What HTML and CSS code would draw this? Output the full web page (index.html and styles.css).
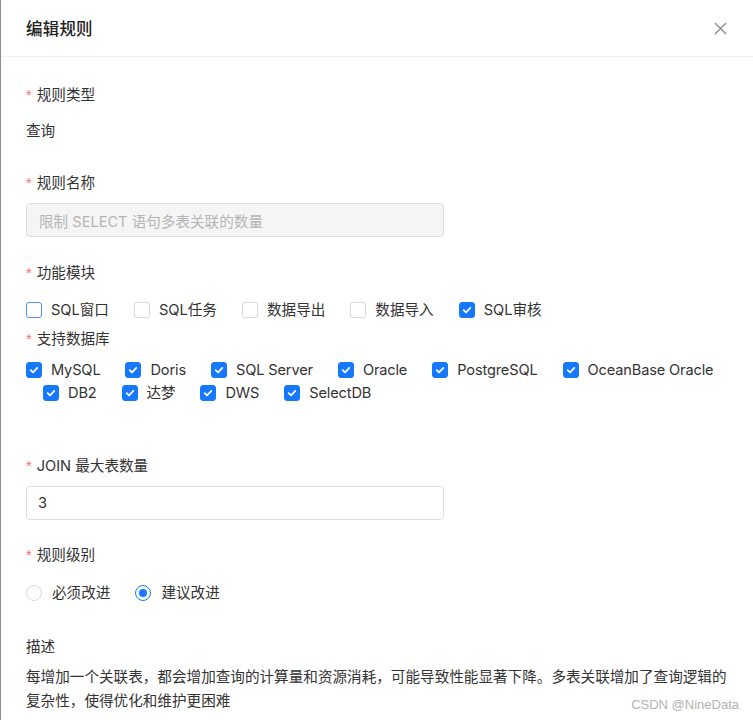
FILE: index.html
```html
<!DOCTYPE html>
<html lang="zh-CN">
<head>
<meta charset="utf-8">
<title>编辑规则</title>
<link rel="stylesheet" href="styles.css">
</head>
<body>
<div class="drawer">
  <div class="header">
    <div class="title">编辑规则</div>
    <svg class="close" width="14" height="14" viewBox="0 0 14 14"><path d="M1 1L13 13M13 1L1 13" stroke="#8a8a8a" stroke-width="1.4" fill="none"/></svg>
  </div>
  <div class="body">
    <div class="item item-type">
      <div class="label"><span class="req">*</span>规则类型</div>
      <div class="plain">查询</div>
    </div>
    <div class="item item-name">
      <div class="label"><span class="req">*</span>规则名称</div>
      <div class="input disabled">限制 SELECT 语句多表关联的数量</div>
    </div>
    <div class="item item-module">
      <div class="label"><span class="req">*</span>功能模块</div>
      <div class="row">
        <label class="cb"><span class="box hover"></span>SQL窗口</label>
        <label class="cb"><span class="box"></span>SQL任务</label>
        <label class="cb"><span class="box"></span>数据导出</label>
        <label class="cb"><span class="box"></span>数据导入</label>
        <label class="cb"><span class="box on"><svg viewBox="0 0 16 16"><path d="M4.2 8.2L6.9 10.8L11.8 5.6" stroke="#fff" stroke-width="2" fill="none" stroke-linecap="round" stroke-linejoin="round"/></svg></span>SQL审核</label>
      </div>
    </div>
    <div class="item item-db">
      <div class="label"><span class="req">*</span>支持数据库</div>
      <div class="row db-row">
        <label class="cb"><span class="box on"><svg viewBox="0 0 16 16"><path d="M4.2 8.2L6.9 10.8L11.8 5.6" stroke="#fff" stroke-width="2" fill="none" stroke-linecap="round" stroke-linejoin="round"/></svg></span>MySQL</label>
        <label class="cb"><span class="box on"><svg viewBox="0 0 16 16"><path d="M4.2 8.2L6.9 10.8L11.8 5.6" stroke="#fff" stroke-width="2" fill="none" stroke-linecap="round" stroke-linejoin="round"/></svg></span>Doris</label>
        <label class="cb"><span class="box on"><svg viewBox="0 0 16 16"><path d="M4.2 8.2L6.9 10.8L11.8 5.6" stroke="#fff" stroke-width="2" fill="none" stroke-linecap="round" stroke-linejoin="round"/></svg></span>SQL Server</label>
        <label class="cb"><span class="box on"><svg viewBox="0 0 16 16"><path d="M4.2 8.2L6.9 10.8L11.8 5.6" stroke="#fff" stroke-width="2" fill="none" stroke-linecap="round" stroke-linejoin="round"/></svg></span>Oracle</label>
        <label class="cb"><span class="box on"><svg viewBox="0 0 16 16"><path d="M4.2 8.2L6.9 10.8L11.8 5.6" stroke="#fff" stroke-width="2" fill="none" stroke-linecap="round" stroke-linejoin="round"/></svg></span>PostgreSQL</label>
        <label class="cb"><span class="box on"><svg viewBox="0 0 16 16"><path d="M4.2 8.2L6.9 10.8L11.8 5.6" stroke="#fff" stroke-width="2" fill="none" stroke-linecap="round" stroke-linejoin="round"/></svg></span>OceanBase Oracle</label>
      </div>
      <div class="row db-row db-row2">
        <label class="cb"><span class="box on"><svg viewBox="0 0 16 16"><path d="M4.2 8.2L6.9 10.8L11.8 5.6" stroke="#fff" stroke-width="2" fill="none" stroke-linecap="round" stroke-linejoin="round"/></svg></span>DB2</label>
        <label class="cb"><span class="box on"><svg viewBox="0 0 16 16"><path d="M4.2 8.2L6.9 10.8L11.8 5.6" stroke="#fff" stroke-width="2" fill="none" stroke-linecap="round" stroke-linejoin="round"/></svg></span>达梦</label>
        <label class="cb"><span class="box on"><svg viewBox="0 0 16 16"><path d="M4.2 8.2L6.9 10.8L11.8 5.6" stroke="#fff" stroke-width="2" fill="none" stroke-linecap="round" stroke-linejoin="round"/></svg></span>DWS</label>
        <label class="cb"><span class="box on"><svg viewBox="0 0 16 16"><path d="M4.2 8.2L6.9 10.8L11.8 5.6" stroke="#fff" stroke-width="2" fill="none" stroke-linecap="round" stroke-linejoin="round"/></svg></span>SelectDB</label>
      </div>
    </div>
    <div class="item item-join">
      <div class="label"><span class="req">*</span>JOIN 最大表数量</div>
      <div class="input value">3</div>
    </div>
    <div class="item item-level">
      <div class="label"><span class="req">*</span>规则级别</div>
      <div class="row radio-row">
        <label class="rd"><span class="circle"></span>必须改进</label>
        <label class="rd"><span class="circle on"></span>建议改进</label>
      </div>
    </div>
    <div class="item item-desc">
      <div class="label">描述</div>
      <div class="desc">每增加一个关联表，都会增加查询的计算量和资源消耗，可能导致性能显著下降。多表关联增加了查询逻辑的复杂性，使得优化和维护更困难</div>
    </div>
  </div>
  <div class="watermark">CSDN @NineData</div>
</div>
</body>
</html>
```

FILE: styles.css
```css
html, body {
  margin: 0;
  padding: 0;
  background: #fff;
}
body {
  font-family: Inter, "Noto Sans CJK SC", sans-serif;
  font-size: 14.6px;
  color: #333;
}
.drawer {
  position: relative;
  height: 720px;
  box-sizing: border-box;
  border-left: 1px solid #8f8f8f;
  overflow: hidden;
}
.header {
  height: 57px;
  box-sizing: border-box;
  border-bottom: 1px solid #f0f0f0;
  display: flex;
  align-items: center;
  justify-content: space-between;
  padding: 0 26px 0 25px;
}
.title {
  font-size: 16.5px;
  font-weight: 500;
  color: #222;
  letter-spacing: 0.2px;
}
.close {
  width: 13px;
  height: 13px;
}
.body {
  padding: 27px 24px 0 25px;
}
.item {
  display: flex;
  flex-direction: column;
}
.label {
  line-height: 22px;
  height: 22px;
  color: #333;
}
.req {
  color: #ff6b6b;
  margin-right: 5px;
  font-family: "Liberation Sans", sans-serif;
}
.plain {
  margin-top: 8px;
  line-height: 34px;
  height: 34px;
}
.item-type { margin-bottom: 24px; }
.input {
  margin-top: 9px;
  width: 418px;
  height: 34px;
  box-sizing: border-box;
  border: 1px solid #dedede;
  border-radius: 4px;
  display: flex;
  align-items: center;
  padding-left: 12px;
}
.input.disabled {
  background: #f5f5f5;
  color: #b5b5b5;
}
.input.value {
  padding-left: 11px;
  color: #333;
}
.item-name { margin-bottom: 25px; }
.row {
  display: flex;
  align-items: center;
}
.item-module .row {
  margin-top: 15px;
  height: 22px;
}
.item-module { margin-bottom: 7px; }
.cb, .rd {
  display: inline-flex;
  align-items: center;
  gap: 9px;
  margin-right: 25px;
  line-height: 22px;
  white-space: nowrap;
}
.box {
  width: 16px;
  height: 16px;
  box-sizing: border-box;
  border: 1px solid #d9d9d9;
  border-radius: 3px;
  background: #fff;
  display: inline-flex;
}
.box.hover {
  border-color: #4d8dff;
}
.box.on {
  background: #1677ff;
  border-color: #1677ff;
}
.box svg {
  width: 14px;
  height: 14px;
}
.db-row {
  height: 22px;
  margin-top: 9px;
  letter-spacing: -0.15px;
}
.db-row2 {
  margin-top: 1px;
  padding-left: 17px;
}
.item-db { margin-bottom: 51px; }
.item-join { margin-bottom: 24px; }
.radio-row {
  margin-top: 16px;
  height: 22px;
}
.rd { gap: 10px; }
.circle {
  width: 16px;
  height: 16px;
  box-sizing: border-box;
  border: 1px solid #d9d9d9;
  border-radius: 50%;
  display: inline-flex;
  align-items: center;
  justify-content: center;
}
.circle.on {
  border-color: #1677ff;
}
.circle.on::after {
  content: "";
  width: 8px;
  height: 8px;
  border-radius: 50%;
  background: #1677ff;
}
.item-level { margin-bottom: 32px; }
.desc {
  margin-top: 7px;
  line-height: 24px;
  color: #333;
}
.watermark {
  position: absolute;
  right: 14px;
  bottom: 8px;
  font-family: "Liberation Sans", sans-serif;
  font-size: 13px;
  color: #b3b3b3;
}
```
